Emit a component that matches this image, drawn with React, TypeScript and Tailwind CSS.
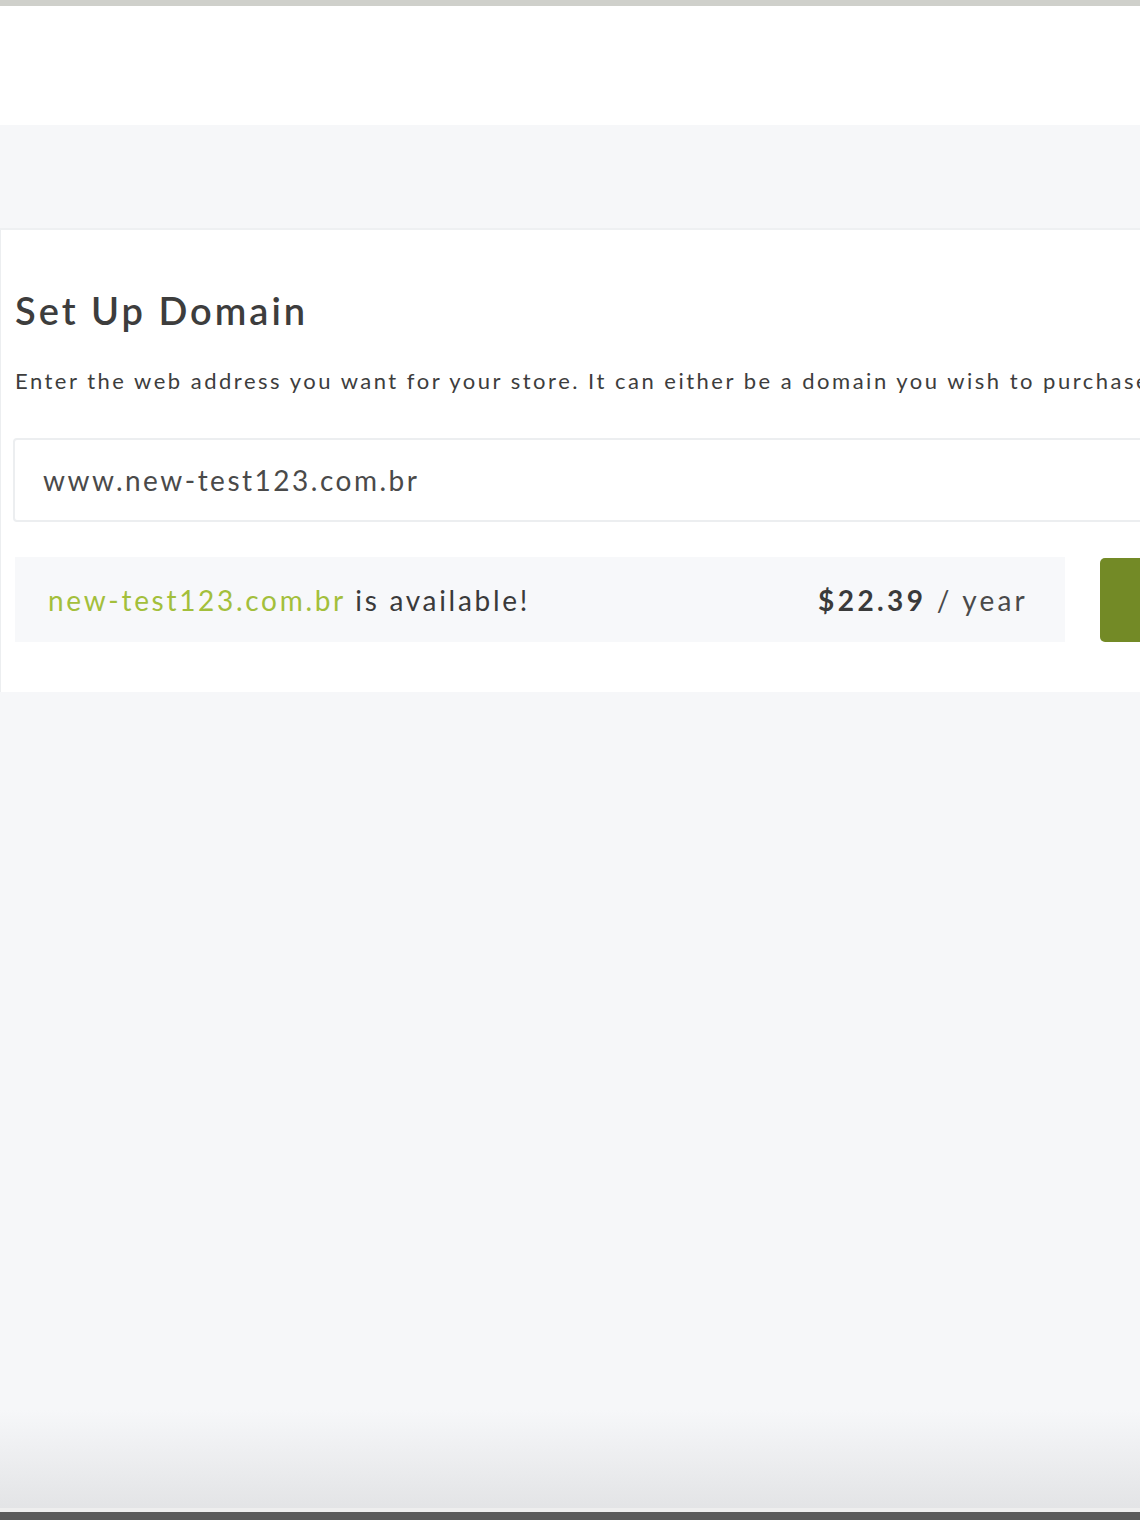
export default function App() {
  const font = { fontFamily: "Lato, 'Open Sans', Arial, sans-serif" };
  return (
    <div className="flex h-[1520px] w-[1140px] flex-col overflow-hidden bg-[#f6f7f9]" style={font}>
      <div className="h-[6px] shrink-0 bg-[#cfd0cb]" />
      <div className="h-[119px] shrink-0 bg-white" />
      <div className="h-[105px] shrink-0 border-b-2 border-[#eef0f2] bg-[#f6f7f9]" />

      <div className="flex h-[462px] shrink-0 flex-col border-l border-[#eceef0] bg-white pl-[14px] shadow-[0_2px_3px_rgba(0,0,0,0.04)]">
        <h1 className="mt-[56px] text-[38px] font-semibold leading-[48px] tracking-[3px] text-[#3d3d3d]">Set Up Domain</h1>
        <p className="mt-[34px] whitespace-nowrap text-[22px] leading-[26px] tracking-[2.5px] text-[#3d3d3d]">
          Enter the web address you want for your store. It can either be a domain you wish to purchase
        </p>
        <div className="-ml-[2px] mt-[44px] flex h-[84px] w-[1200px] shrink-0 items-center rounded-[4px] border-2 border-[#eceef0] pl-[28px] text-[28px] tracking-[2.5px] text-[#4a4a4a]">
          www.new-test123.com.br
        </div>
        <div className="mt-[35px] flex items-center gap-[35px]">
          <div className="flex h-[85px] w-[1050px] shrink-0 items-center justify-between bg-[#f7f8fa] pl-[33px] pr-[37px] text-[28px] tracking-[2.7px]">
            <span>
              <span className="text-[#a3bf3b]">new-test123.com.br</span>
              <span className="text-[#3a3a3a]"> is available!</span>
            </span>
            <span className="text-[#3a3a3a]">
              <span className="font-bold tracking-[3.4px]">$22.39</span>
              <span className="text-[#4a4a4a] tracking-[3.2px]"> / year</span>
            </span>
          </div>
          <button className="h-[84px] w-[160px] shrink-0 rounded-[5px] bg-[#738a26]" />
        </div>
      </div>

      <div className="flex-1 bg-[linear-gradient(to_bottom,#f6f7f9_0%,#f6f7f9_88%,#e3e4e6_100%)]" />
      <div className="h-[4px] shrink-0 bg-[#eeeeee]" />
      <div className="h-[8px] shrink-0 bg-[#5a5a5a]" />
    </div>
  );
}
